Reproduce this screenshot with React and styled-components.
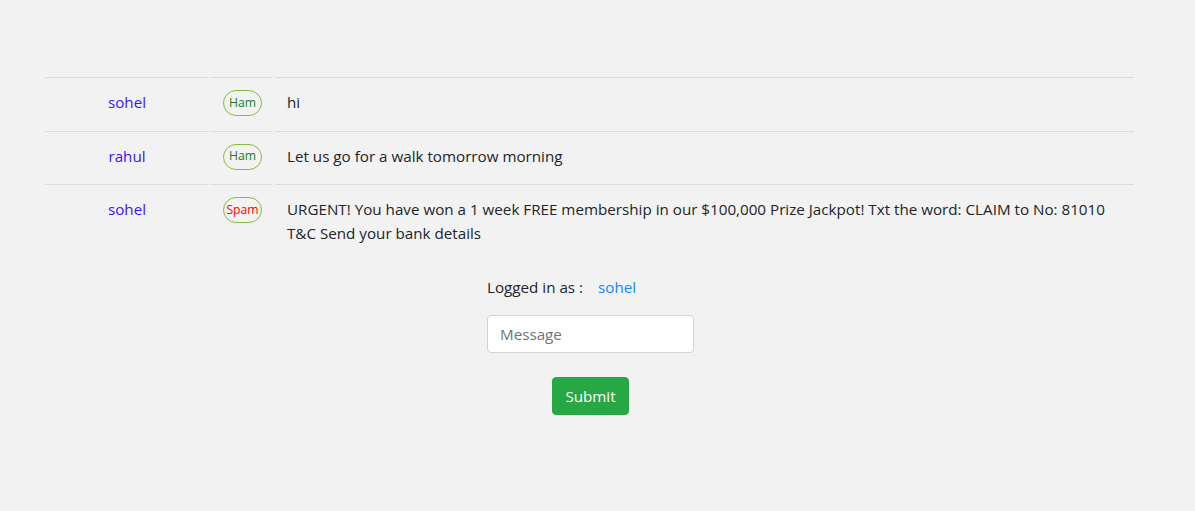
import React from 'react'
import styled, { createGlobalStyle } from 'styled-components'

const Global = createGlobalStyle`
	body {
		margin: 0;
		background: #f2f2f2;
		font-family: "Open Sans", "Noto Sans", sans-serif;
		font-size: 15.2px;
		line-height: 24px;
		color: #212529;
	}
`

const Page = styled.div`
	padding: 77px 0 0 45px;
	width: 1089px;
`

const Table = styled.div`
	display: grid;
	grid-template-columns: 164px 61px 1fr;
	column-gap: 2px;
`

const Cell = styled.div`
	border-top: 1px solid #dcdcdc;
	padding: 12px;
	text-align: ${props => props.align || 'left'};
	&:nth-child(3n) {
		margin-left: 1px;
	}
`

const Name = styled.span`
	color: #3a14ff;
`

const Badge = styled.span`
	display: inline-flex;
	align-items: center;
	justify-content: center;
	box-sizing: border-box;
	width: 39px;
	height: 26px;
	margin: 0 1px 2.5px 0;
	border: 1px solid #86bc3c;
	border-radius: 13px;
	font-size: 12.2px;
	line-height: 1;
	color: ${props => (props.spam ? '#ff0000' : '#1f7a1f')};
	vertical-align: top;
`

const Form = styled.form`
	width: 207px;
	margin: 18px 0 0 442px;
	display: flex;
	flex-direction: column;
`

const Label = styled.div`
	white-space: nowrap;
`

const User = styled.span`
	color: #1a85ff;
	margin-left: 15px;
`

const Input = styled.input`
	margin-top: 16px;
	box-sizing: border-box;
	height: 38px;
	width: 100%;
	padding: 6px 12px;
	border: 1px solid #ced4da;
	border-radius: 4px;
	background: #fff;
	font: inherit;
	color: #495057;
	outline: none;
	&::placeholder {
		color: #6c757d;
	}
`

const Button = styled.button`
	align-self: center;
	margin-top: 24px;
	height: 38px;
	padding: 6px 12px;
	border: 1px solid #28a745;
	border-radius: 4px;
	background: #28a745;
	color: #fff;
	font: inherit;
	cursor: pointer;
`

const messages = [
	{ user: 'sohel', label: 'Ham', text: 'hi' },
	{ user: 'rahul', label: 'Ham', text: 'Let us go for a walk tomorrow morning' },
	{
		user: 'sohel',
		label: 'Spam',
		text: 'URGENT! You have won a 1 week FREE membership in our $100,000 Prize Jackpot! Txt the word: CLAIM to No: 81010 T&C Send your bank details'
	}
]

export default function App() {
	return (
		<Page>
			<Global />
			<Table>
				{messages.map((m, i) => (
					<React.Fragment key={i}>
						<Cell align='center'>
							<Name>{m.user}</Name>
						</Cell>
						<Cell align='center'>
							<Badge spam={m.label === 'Spam'}>{m.label}</Badge>
						</Cell>
						<Cell>{m.text}</Cell>
					</React.Fragment>
				))}
			</Table>
			<Form onSubmit={e => e.preventDefault()}>
				<Label>
					Logged in as :<User>sohel</User>
				</Label>
				<Input placeholder='Message' />
				<Button type='submit'>Submit</Button>
			</Form>
		</Page>
	)
}
